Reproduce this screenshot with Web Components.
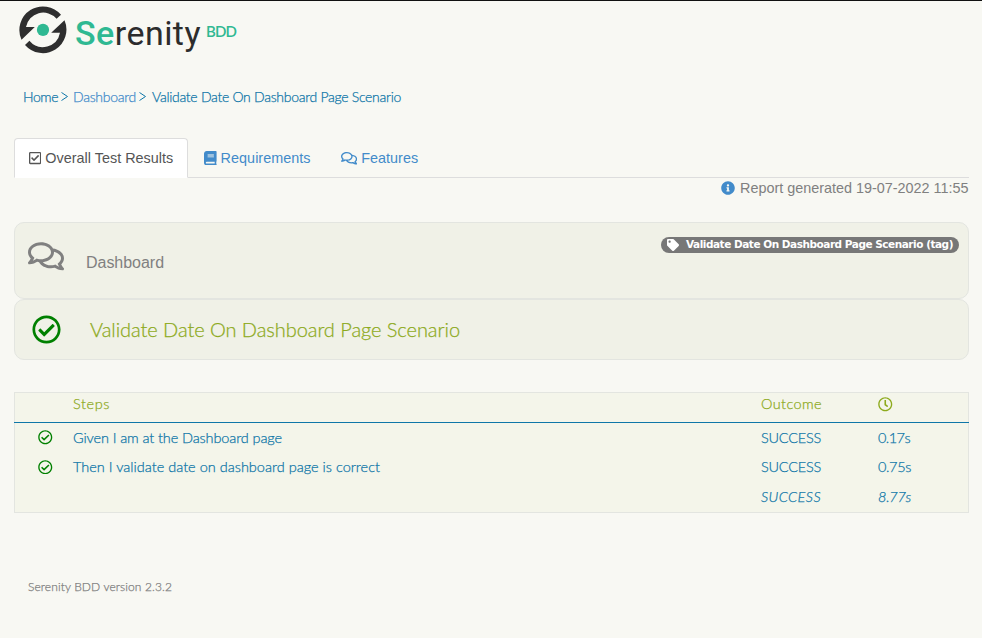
<!DOCTYPE html>
<html lang="en">
<head>
<meta charset="utf-8">
<title>Serenity BDD</title>
<style>
html,body{margin:0;height:638px;overflow:hidden;background:#f8f8f3}
</style>
</head>
<body>
<report-page></report-page>
<script>
const base = 'font-family:Lato,"Open Sans",sans-serif;font-weight:300;';
const stroke = '-webkit-text-stroke:.25px currentColor;';
function define(name, html, ready) {
  customElements.define(name, class extends HTMLElement {
    constructor() {
      super();
      const t = document.createElement('template');
      t.innerHTML = html;
      this.attachShadow({mode: 'open'}).append(t.content.cloneNode(true));
    }
    connectedCallback() { if (ready) ready(this); }
  });
}

const ICONS = {
  comments: [576, 'M532 386.2c27.5-27.1 44-61.1 44-98.2 0-80-76.5-146.1-176.2-157.9C368.3 72.5 294.3 32 208 32 93.1 32 0 103.6 0 192c0 37 16.5 71 44 98.2-15.3 30.7-37.3 54.5-37.7 54.9-6.3 6.7-8.1 16.5-4.4 25 3.6 8.5 12 14 21.2 14 53.5 0 96.7-20.2 125.2-38.8 9.2 2.1 18.700 3.700 28.400 4.900C208.100 407.600 281.800 448 368 448c20.800 0 40.800-2.400 59.800-6.800C456.300 459.700 499.400 480 553 480c9.200 0 17.500-5.500 21.200-14 3.600-8.500 1.900-18.300-4.400-25-.4-.3-22.500-24.100-37.800-54.800zm-392.800-92.300L122.100 305c-14.100 9.100-28.500 16.300-43.100 21.400 2.700-4.700 5.400-9.700 8-14.800l15.500-31.100L77.700 256C64.200 242.600 48 220.700 48 192c0-60.700 73.300-112 160-112s160 51.300 160 112-73.300 112-160 112c-16.500 0-33-1.900-49-5.600l-19.800-4.500zM498.300 352l-24.700 24.400 15.500 31.100c2.600 5.100 5.300 10.100 8 14.800-14.600-5.100-29-12.300-43.100-21.400l-17.100-11.100-19.900 4.600c-16 3.700-32.500 5.600-49 5.600-54 0-102.200-20.100-131.300-49.700C338 339.500 416 272.900 416 192c0-3.400-.4-6.700-.7-10C479.700 196.500 528 238.800 528 288c0 28.700-16.200 50.600-29.700 64z'],
  check: [512, 'M256 8C119.033 8 8 119.033 8 256s111.033 248 248 248 248-111.033 248-248S392.967 8 256 8zm0 48c110.532 0 200 89.451 200 200 0 110.532-89.451 200-200 200-110.532 0-200-89.451-200-200 0-110.532 89.451-200 200-200m140.204 130.267l-22.536-22.718c-4.667-4.705-12.265-4.736-16.970-.068L215.346 303.697l-59.792-60.277c-4.667-4.705-12.265-4.736-16.970-.069l-22.719 22.536c-4.705 4.667-4.736 12.265-.068 16.971l90.781 91.516c4.667 4.705 12.265 4.736 16.970.068l172.589-171.204c4.704-4.668 4.734-12.266.067-16.971z'],
  square: [448, 'M400 32H48C21.490 32 0 53.490 0 80v352c0 26.510 21.490 48 48 48h352c26.510 0 48-21.490 48-48V80c0-26.510-21.490-48-48-48zm0 400H48V80h352v352zm-35.864-241.724L191.547 361.480c-4.705 4.667-12.303 4.637-16.970-.068l-90.781-91.516c-4.667-4.705-4.637-12.303.069-16.971l22.719-22.536c4.705-4.667 12.303-4.637 16.970.069l59.792 60.277 141.352-140.216c4.705-4.667 12.303-4.637 16.970.068l22.536 22.718c4.667 4.706 4.637 12.304-.068 16.971z'],
  book: [448, 'M448 360V24c0-13.300-10.700-24-24-24H96C43 0 0 43 0 96v320c0 53 43 96 96 96h328c13.300 0 24-10.700 24-24v-16c0-7.500-3.500-14.300-8.900-18.700-4.200-15.400-4.200-59.300 0-74.700 5.400-4.300 8.900-11.100 8.900-18.600zM128 134c0-3.300 2.700-6 6-6h212c3.300 0 6 2.700 6 6v20c0 3.300-2.700 6-6 6H134c-3.300 0-6-2.700-6-6v-20zm0 64c0-3.300 2.700-6 6-6h212c3.300 0 6 2.700 6 6v20c0 3.300-2.700 6-6 6H134c-3.300 0-6-2.700-6-6v-20zm253.400 250H96c-17.700 0-32-14.300-32-32 0-17.600 14.400-32 32-32h285.400c-1.900 17.100-1.900 46.900 0 64z'],
  info: [512, 'M256 8C119.043 8 8 119.083 8 256c0 136.997 111.043 248 248 248s248-111.003 248-248C504 119.083 392.957 8 256 8zm0 110c23.196 0 42 18.804 42 42s-18.804 42-42 42-42-18.804-42-42 18.804-42 42-42zm56 254c0 6.627-5.373 12-12 12h-88c-6.627 0-12-5.373-12-12v-24c0-6.627 5.373-12 12-12h12v-64h-12c-6.627 0-12-5.373-12-12v-24c0-6.627 5.373-12 12-12h64c6.627 0 12 5.373 12 12v100h12c6.627 0 12 5.373 12 12v24z'],
  tag: [512, 'M0 252.118V48C0 21.490 21.490 0 48 0h204.118a48 48 0 0 1 33.941 14.059l211.882 211.882c18.745 18.745 18.745 49.137 0 67.882L293.823 497.941c-18.745 18.745-49.137 18.745-67.882 0L14.059 286.059A48 48 0 0 1 0 252.118zM112 64c-26.510 0-48 21.490-48 48s21.490 48 48 48 48-21.490 48-48-21.490-48-48-48z'],
  clock: [512, 'M256 8C119 8 8 119 8 256s111 248 248 248 248-111 248-248S393 8 256 8zm0 448c-110.500 0-200-89.500-200-200S145.500 56 256 56s200 89.500 200 200-89.500 200-200 200zm61.800-104.400l-84.900-61.700c-3.100-2.300-4.900-5.900-4.900-9.700V116c0-6.600 5.400-12 12-12h32c6.600 0 12 5.400 12 12v141.700l66.800 48.600c5.400 3.900 6.500 11.400 2.600 16.800L334.600 349c-3.900 5.300-11.400 6.500-16.800 2.600z']
};

/* Single-colour glyph; size is the em height in px. */
define('fa-icon', `<style>:host{display:inline-flex;flex:none}svg{display:block;fill:currentColor}</style><svg><path/></svg>`, el => {
  const [w, d] = ICONS[el.getAttribute('name')], s = +el.getAttribute('size');
  const svg = el.shadowRoot.querySelector('svg');
  svg.setAttribute('viewBox', `0 0 ${w} 512`);
  svg.setAttribute('height', s);
  svg.setAttribute('width', s * w / 512);
  svg.firstElementChild.setAttribute('d', d);
});

/* One line of text, tracked so that it fills the width in its "w" attribute. */
define('fit-text', `<style>:host{display:inline-block;white-space:nowrap;flex:none}span{display:inline-block}</style><span><slot></slot></span>`, el => {
  const w = +el.getAttribute('w'), span = el.shadowRoot.querySelector('span');
  el.style.width = w + 'px';
  const n = el.textContent.length;
  span.style.letterSpacing = (w - span.getBoundingClientRect().width) / n + 'px';
});

define('serenity-logo', `<style>
:host{display:flex;height:56px;padding-left:18px}
svg{flex:none;width:50px;height:56px;margin-top:-1px}
.word{display:flex;align-items:flex-start;padding-left:7px;font-family:Roboto,sans-serif;font-weight:400;color:#2c2c2c}
.name{font-size:34px;line-height:40px;margin-top:12px}
b{color:#2fb992;font-weight:500}
.bdd{font-family:Lato,sans-serif;font-weight:600;font-size:15px;line-height:18px;margin:21px 0 0 5px;color:#2fb992}
</style>
<svg viewBox="18 0 50 56"><g fill="#2e2e2e">
<path d="M21.500 39.800A23.600 23.600 0 0 1 61 14.800L56.600 18.800A17.500 17.500 0 0 0 26 27H34.800Z"/>
<path d="M64.500 20.200A23.600 23.600 0 0 1 25 45L29.400 40.800A17.500 17.500 0 0 0 60 32.800H51.200Z"/></g>
<circle cx="43" cy="29.900" r="6.100" fill="#2fb992"/></svg>
<div class="word"><fit-text class="name" w="126"><b>Se</b>renity</fit-text><fit-text class="bdd" w="30">BDD</fit-text></div>`);

define('bread-crumbs', `<style>
:host{display:flex;padding:27px 0 2px 23px;height:24px;align-items:center;font-size:14px;color:#0e76a8;${base}${stroke}}
svg{flex:none;width:7px;height:9px;fill:none;stroke:currentColor}
</style>
<fit-text w="35">Home</fit-text><svg style="margin:0 5px 0 3px"><path d="M.5 .5L6.500 4.500L.5 8.500"/></svg><fit-text w="63" style="color:#428bca">Dashboard</fit-text><svg style="margin:0 6px 0 3px"><path d="M.5 .5L6.500 4.500L.5 8.500"/></svg><fit-text w="249">Validate Date On Dashboard Page Scenario</fit-text>`);

define('tab-item', `<style>
:host{display:flex;align-items:center;gap:4px;box-sizing:border-box;height:40px;padding:0 14px;border:1px solid transparent;color:#428bca}
:host([active]){background:#fff;border-color:#ddd #ddd #fff;border-radius:4px 4px 0 0;color:#555}
</style><slot></slot>`);

define('tab-bar', `<style>
:host{display:flex;margin:28px 13px 0 14px;height:39px;border-bottom:1px solid #ddd;font:14.400px "Liberation Sans",Arial,sans-serif}
</style>
<tab-item active style="width:174px"><fa-icon name="square" size="14"></fa-icon><fit-text w="128">Overall Test Results</fit-text></tab-item>
<tab-item style="width:138px;padding-left:15px"><fa-icon name="book" size="14.400"></fa-icon><fit-text w="90">Requirements</fit-text></tab-item>
<tab-item><fa-icon name="comments" size="14.400"></fa-icon><fit-text w="57">Features</fit-text></tab-item>`);

define('report-date', `<style>
:host{display:flex;justify-content:flex-end;align-items:center;gap:5px;height:20px;padding-right:13.500px;font:14.400px "Liberation Sans",Arial,sans-serif;color:#808080}
fa-icon{color:#428bca}
</style><fa-icon name="info" size="14"></fa-icon><fit-text w="228.500">Report generated 19-07-2022 11:55</fit-text>`);

define('tag-badge', `<style>
:host{display:flex;align-items:center;box-sizing:border-box;width:298px;height:16px;padding-left:6px;gap:7px;border-radius:8px;background:#777;color:#fff;font:bold 10.500px/16px "DejaVu Sans",Verdana,sans-serif}
fit-text{margin-top:-2px}
</style><fa-icon name="tag" size="12"></fa-icon><fit-text w="267">Validate Date On Dashboard Page Scenario (tag)</fit-text>`);

define('report-panel', `<style>
:host{display:flex;box-sizing:border-box;margin:0 13px 0 14px;border:1px solid #e3e5e0;border-radius:10px;background:#f0f1e7}
</style><slot></slot>`);

define('steps-table', `<style>
:host{display:grid;box-sizing:border-box;grid-template-columns:58px 688px 117px 1fr;grid-template-rows:30px 30px 29px 30px;margin:32px 13px 0 14px;height:121px;border:1px solid #e3e5e0;background:#f4f5ea;font-size:14.500px;color:#0e76a8;${base}${stroke}}
div{display:flex;align-items:center}
div:not(.h)>fit-text{margin-top:-2px}
.h{color:#8daa1c;border-bottom:1px solid #0e76a8;align-items:flex-start;line-height:22px}
.h fa-icon{margin-top:4px}
.h:first-of-type{margin-left:-1px}.h:nth-of-type(4){margin-right:-1px}
.c{color:#008000;padding-left:23px}
.c fa-icon{margin-top:-1px}
.r{font-style:italic}
</style>
<div class="h"></div><div class="h"><fit-text w="37">Steps</fit-text></div><div class="h"><fit-text w="61">Outcome</fit-text></div><div class="h"><fa-icon name="clock" size="14.500"></fa-icon></div>
<div class="c"><fa-icon name="check" size="14.500"></fa-icon></div><div><fit-text w="209">Given I am at the Dashboard page</fit-text></div><div><fit-text w="60">SUCCESS</fit-text></div><div><fit-text w="32">0.17s</fit-text></div>
<div class="c"><fa-icon name="check" size="14.500"></fa-icon></div><div><fit-text w="307">Then I validate date on dashboard page is correct</fit-text></div><div><fit-text w="60">SUCCESS</fit-text></div><div><fit-text w="33">0.75s</fit-text></div>
<div></div><div></div><div class="r"><fit-text w="60">SUCCESS</fit-text></div><div class="r"><fit-text w="33">8.77s</fit-text></div>`);

define('report-page', `<style>
:host{display:block;box-sizing:border-box;width:982px;height:638px;border-top:1px solid #111;background:#f8f8f3;${base}}
.feature{margin-top:24px;height:77px;color:#808080}
.feature>fa-icon{padding:17px 0 0 13px;width:49px;box-sizing:border-box}
.feature>fit-text{font:16px/20px "Liberation Sans",Arial,sans-serif;margin:30px 0 0 22px}
tag-badge{margin:14px 9px 0 auto}
.scenario{height:61px;align-items:center}
.scenario>fa-icon{color:#008000;padding-left:17px}
.scenario>fit-text{color:#8daa1c;font-size:20px;margin:-2px 0 0 29px;${stroke}}
.foot{padding:66px 0 0 28px;font-size:12px;line-height:16px;color:#808080;${stroke}}
</style>
<serenity-logo></serenity-logo>
<bread-crumbs></bread-crumbs>
<tab-bar></tab-bar>
<report-date></report-date>
<report-panel class="feature"><fa-icon name="comments" size="32.500"></fa-icon><fit-text w="78">Dashboard</fit-text><tag-badge></tag-badge></report-panel>
<report-panel class="scenario"><fa-icon name="check" size="29"></fa-icon><fit-text w="370">Validate Date On Dashboard Page Scenario</fit-text></report-panel>
<steps-table></steps-table>
<div class="foot"><fit-text w="144">Serenity BDD version 2.3.2</fit-text></div>`);
</script>
</body>
</html>
